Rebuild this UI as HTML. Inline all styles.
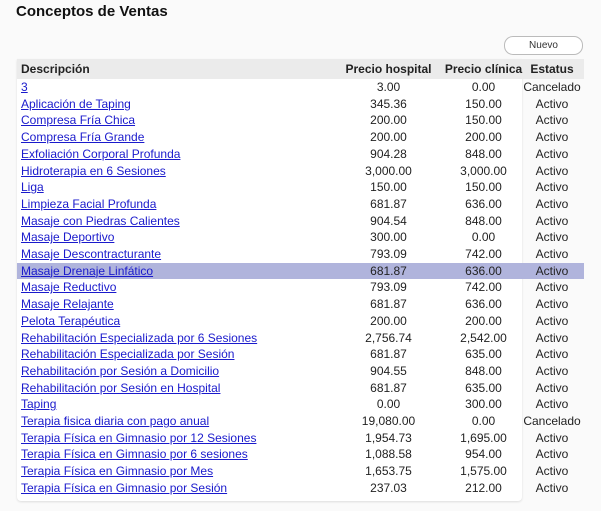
<!DOCTYPE html>
<html><head><meta charset="utf-8"><style>
html,body{margin:0;padding:0;width:601px;height:511px;background:#fafafa;overflow:hidden;font-family:"Liberation Sans",Arial,sans-serif;}
h1{position:absolute;left:16px;top:3px;margin:0;font-size:15px;font-weight:bold;color:#111;}
.btn{position:absolute;left:504px;top:36px;width:77px;height:17px;border:1px solid #bbb;border-radius:9px;background:#fff;font-size:10px;color:#333;text-align:center;line-height:17px;}
.panel{position:absolute;left:17px;top:59px;width:505px;height:442px;background:#fff;border-radius:0 0 4px 4px;box-shadow:0 1px 2px #ddd;}
.hdr{position:absolute;left:17px;top:59px;width:567px;height:20px;background:#ebebeb;font-weight:bold;font-size:12px;color:#111;}
.row{position:absolute;left:17px;width:567px;height:16.7px;font-size:12px;color:#222;line-height:16.7px;}
.c{position:absolute;top:0;white-space:nowrap;}
.d{left:4px;}
.h{left:323px;width:97px;text-align:center;}
.k{left:420px;width:93px;text-align:center;}
.s{left:503px;width:64px;text-align:center;}
a{color:#1a1acc;text-decoration:underline;}
.sel{background:#b0b4dc;}
</style></head><body>
<h1>Conceptos de Ventas</h1>
<div class="btn">Nuevo</div>
<div class="panel"></div>
<div class="hdr"><div class="row" style="left:0;top:1.5px;height:17px;line-height:17px"><span class="c d">Descripción</span><span class="c h">Precio hospital</span><span class="c k">Precio clínica</span><span class="c s">Estatus</span></div></div>
<div id="rows"></div>
<div class="row" style="top:79px"><a class="c d">3</a><span class="c h">3.00</span><span class="c k">0.00</span><span class="c s">Cancelado</span></div>
<div class="row" style="top:95.7px"><a class="c d">Aplicación de Taping</a><span class="c h">345.36</span><span class="c k">150.00</span><span class="c s">Activo</span></div>
<div class="row" style="top:112.4px"><a class="c d">Compresa Fría Chica</a><span class="c h">200.00</span><span class="c k">150.00</span><span class="c s">Activo</span></div>
<div class="row" style="top:129.1px"><a class="c d">Compresa Fría Grande</a><span class="c h">200.00</span><span class="c k">200.00</span><span class="c s">Activo</span></div>
<div class="row" style="top:145.8px"><a class="c d">Exfoliación Corporal Profunda</a><span class="c h">904.28</span><span class="c k">848.00</span><span class="c s">Activo</span></div>
<div class="row" style="top:162.5px"><a class="c d">Hidroterapia en 6 Sesiones</a><span class="c h">3,000.00</span><span class="c k">3,000.00</span><span class="c s">Activo</span></div>
<div class="row" style="top:179.2px"><a class="c d">Liga</a><span class="c h">150.00</span><span class="c k">150.00</span><span class="c s">Activo</span></div>
<div class="row" style="top:195.9px"><a class="c d">Limpieza Facial Profunda</a><span class="c h">681.87</span><span class="c k">636.00</span><span class="c s">Activo</span></div>
<div class="row" style="top:212.6px"><a class="c d">Masaje con Piedras Calientes</a><span class="c h">904.54</span><span class="c k">848.00</span><span class="c s">Activo</span></div>
<div class="row" style="top:229.3px"><a class="c d">Masaje Deportivo</a><span class="c h">300.00</span><span class="c k">0.00</span><span class="c s">Activo</span></div>
<div class="row" style="top:246px"><a class="c d">Masaje Descontracturante</a><span class="c h">793.09</span><span class="c k">742.00</span><span class="c s">Activo</span></div>
<div class="row sel" style="top:262.7px"><a class="c d">Masaje Drenaje Linfático</a><span class="c h">681.87</span><span class="c k">636.00</span><span class="c s">Activo</span></div>
<div class="row" style="top:279.4px"><a class="c d">Masaje Reductivo</a><span class="c h">793.09</span><span class="c k">742.00</span><span class="c s">Activo</span></div>
<div class="row" style="top:296.1px"><a class="c d">Masaje Relajante</a><span class="c h">681.87</span><span class="c k">636.00</span><span class="c s">Activo</span></div>
<div class="row" style="top:312.8px"><a class="c d">Pelota Terapéutica</a><span class="c h">200.00</span><span class="c k">200.00</span><span class="c s">Activo</span></div>
<div class="row" style="top:329.5px"><a class="c d">Rehabilitación Especializada por 6 Sesiones</a><span class="c h">2,756.74</span><span class="c k">2,542.00</span><span class="c s">Activo</span></div>
<div class="row" style="top:346.2px"><a class="c d">Rehabilitación Especializada por Sesión</a><span class="c h">681.87</span><span class="c k">635.00</span><span class="c s">Activo</span></div>
<div class="row" style="top:362.9px"><a class="c d">Rehabilitación por Sesión a Domicilio</a><span class="c h">904.55</span><span class="c k">848.00</span><span class="c s">Activo</span></div>
<div class="row" style="top:379.6px"><a class="c d">Rehabilitación por Sesión en Hospital</a><span class="c h">681.87</span><span class="c k">635.00</span><span class="c s">Activo</span></div>
<div class="row" style="top:396.3px"><a class="c d">Taping</a><span class="c h">0.00</span><span class="c k">300.00</span><span class="c s">Activo</span></div>
<div class="row" style="top:413px"><a class="c d">Terapia fisica diaria con pago anual</a><span class="c h">19,080.00</span><span class="c k">0.00</span><span class="c s">Cancelado</span></div>
<div class="row" style="top:429.7px"><a class="c d">Terapia Física en Gimnasio por 12 Sesiones</a><span class="c h">1,954.73</span><span class="c k">1,695.00</span><span class="c s">Activo</span></div>
<div class="row" style="top:446.4px"><a class="c d">Terapia Física en Gimnasio por 6 sesiones</a><span class="c h">1,088.58</span><span class="c k">954.00</span><span class="c s">Activo</span></div>
<div class="row" style="top:463.1px"><a class="c d">Terapia Física en Gimnasio por Mes</a><span class="c h">1,653.75</span><span class="c k">1,575.00</span><span class="c s">Activo</span></div>
<div class="row" style="top:479.8px"><a class="c d">Terapia Física en Gimnasio por Sesión</a><span class="c h">237.03</span><span class="c k">212.00</span><span class="c s">Activo</span></div>
</body></html>
